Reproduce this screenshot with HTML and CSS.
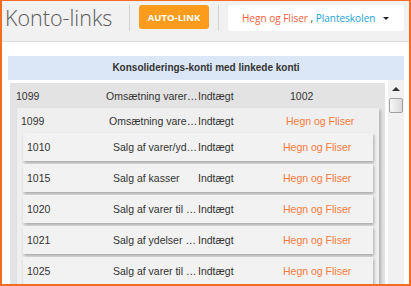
FILE: index.html
```html
<!DOCTYPE html>
<html lang="da">

<head>
  <meta charset="UTF-8">
  <meta name="viewport" content="width=device-width, initial-scale=1.0">
  <title>Konto-links</title>
  <link rel="stylesheet" href="styles.css">
</head>

<body>
  <div class="frame">
    <!-- topbar -->
    <header class="topbar">
      <h1 class="title">Konto-links</h1>
      <span class="divider"></span>
      <button class="btn-autolink">AUTO-LINK</button>
      <span class="divider"></span>
      <div class="company-select">
        <span class="co-a">Hegn og Fliser</span>&nbsp;<span class="co-sep">,</span>&nbsp;<span class="co-b">Planteskolen</span>
        <span class="caret"></span>
      </div>
    </header>

    <main class="content">
      <div class="section-title">Konsoliderings-konti med linkede konti</div>

      <div class="list-wrap">
        <div class="tree">
          <div class="group">
            <div class="row row-lvl1">
              <span>1099</span><span>Omsætning varer og ydelser</span><span>Indtægt</span><span>1002</span>
            </div>

            <div class="subgroup">
              <div class="row row-lvl2">
                <span>1099</span><span>Omsætning varer og ydelser</span><span>Indtægt</span><span class="link">Hegn og Fliser</span>
              </div>

              <div class="row card">
                <span>1010</span><span>Salg af varer/ydelser m. moms</span><span>Indtægt</span><span class="link">Hegn og Fliser</span>
              </div>
              <div class="row card">
                <span>1015</span><span>Salg af kasser</span><span>Indtægt</span><span class="link">Hegn og Fliser</span>
              </div>
              <div class="row card">
                <span>1020</span><span>Salg af varer til udlandet</span><span>Indtægt</span><span class="link">Hegn og Fliser</span>
              </div>
              <div class="row card">
                <span>1021</span><span>Salg af ydelser til udlandet</span><span>Indtægt</span><span class="link">Hegn og Fliser</span>
              </div>
              <div class="row card">
                <span>1025</span><span>Salg af varer til EU</span><span>Indtægt</span><span class="link">Hegn og Fliser</span>
              </div>
            </div>
          </div>
        </div>

        <!-- scrollbar -->
        <div class="scrollbar">
          <span class="arrow-up"></span>
          <span class="thumb"></span>
        </div>
      </div>
    </main>
  </div>
</body>

</html>
```

FILE: styles.css
```css
* {
  margin: 0;
  padding: 0;
  box-sizing: border-box;
}

body {
  background: #fff;
}

/* ydre ramme */
.frame {
  width: 411px;
  height: 286px;
  border: 2px solid #f36c21;
  border-top-width: 1px;
  display: flex;
  flex-direction: column;
  overflow: hidden;
}

/* topbar */
.topbar {
  flex: none;
  height: 41px;
  display: flex;
  align-items: flex-start;
  padding: 4px 5px 0 3px;
  background: #f1f1f1;
  border-bottom: 1px solid #dedede;
  font-family: "Open Sans", "Liberation Sans", sans-serif;
}

.title {
  width: 124px;
  font-size: 21.5px;
  font-weight: 300;
  line-height: 26px;
  color: #5a5a5a;
}

.divider {
  width: 1px;
  height: 26px;
  background: #d2d2d2;
}

.btn-autolink {
  margin: 0 9px;
  width: 70px;
  height: 24px;
  border: none;
  border-radius: 3px;
  background: #fb9c1c;
  color: #fff;
  font-family: "Open Sans", "Liberation Sans", sans-serif;
  font-size: 9.5px;
  font-weight: 700;
  cursor: pointer;
}

.company-select {
  margin-left: 9px;
  width: 176px;
  height: 26px;
  display: flex;
  align-items: center;
  padding-left: 14px;
  background: #fff;
  border-radius: 3px;
  font-size: 10px;
}

.co-a {
  color: #f5603a;
}

.co-sep {
  color: #444;
}

.co-b {
  color: #1c9fd9;
}

.caret {
  margin-left: auto;
  margin-right: 15px;
  border-left: 3px solid transparent;
  border-right: 3px solid transparent;
  border-top: 3px solid #222;
}

/* indhold */
.content {
  flex: 1;
  min-height: 0;
  display: flex;
  flex-direction: column;
  padding: 14px 5px 0 6px;
  font-family: "Liberation Sans", Arial, sans-serif;
}

.section-title {
  flex: none;
  height: 24px;
  line-height: 24px;
  text-align: center;
  background: #dbe7f6;
  color: #333;
  font-size: 10px;
  font-weight: 700;
}

.list-wrap {
  flex: 1;
  min-height: 0;
  display: flex;
}

.tree {
  flex: 1;
  padding: 3px 3px 0 2px;
  overflow: hidden;
}

.group {
  background: #e3e3e3;
  padding-bottom: 6px;
}

/* rækker */
.row {
  display: grid;
  align-items: center;
  font-size: 10.5px;
  color: #333;
}

.row span {
  white-space: nowrap;
  overflow: hidden;
  text-overflow: ellipsis;
}

.row .link {
  color: #f77b3d;
}

.row-lvl1 {
  height: 25px;
  padding-left: 6px;
  grid-template-columns: 90px 92px 92px 1fr;
}

.subgroup {
  margin: 0 6px 0 7px;
  padding-bottom: 4px;
  background: #efefef;
  box-shadow: 2px 2px 3px rgba(0, 0, 0, 0.22);
}

.row-lvl2 {
  height: 25px;
  padding-left: 4px;
  grid-template-columns: 88px 89px 88px 1fr;
}

.card {
  height: 28px;
  margin: 0 6px 3px;
  padding-left: 4px;
  grid-template-columns: 86px 85px 85px 1fr;
  background: #f2f2f2;
  box-shadow: 1px 2px 3px rgba(0, 0, 0, 0.3);
}

/* scrollbar */
.scrollbar {
  flex: none;
  width: 16px;
  display: flex;
  flex-direction: column;
  align-items: center;
  padding-top: 7px;
  background: #f1f1f1;
}

.arrow-up {
  border-left: 4px solid transparent;
  border-right: 4px solid transparent;
  border-bottom: 4px solid #333;
}

.thumb {
  margin-top: 7px;
  width: 14px;
  height: 15px;
  border: 1px solid #a0a0a0;
  border-radius: 2px;
  background: linear-gradient(to right, #f6f6f6, #dadada);
}
```
